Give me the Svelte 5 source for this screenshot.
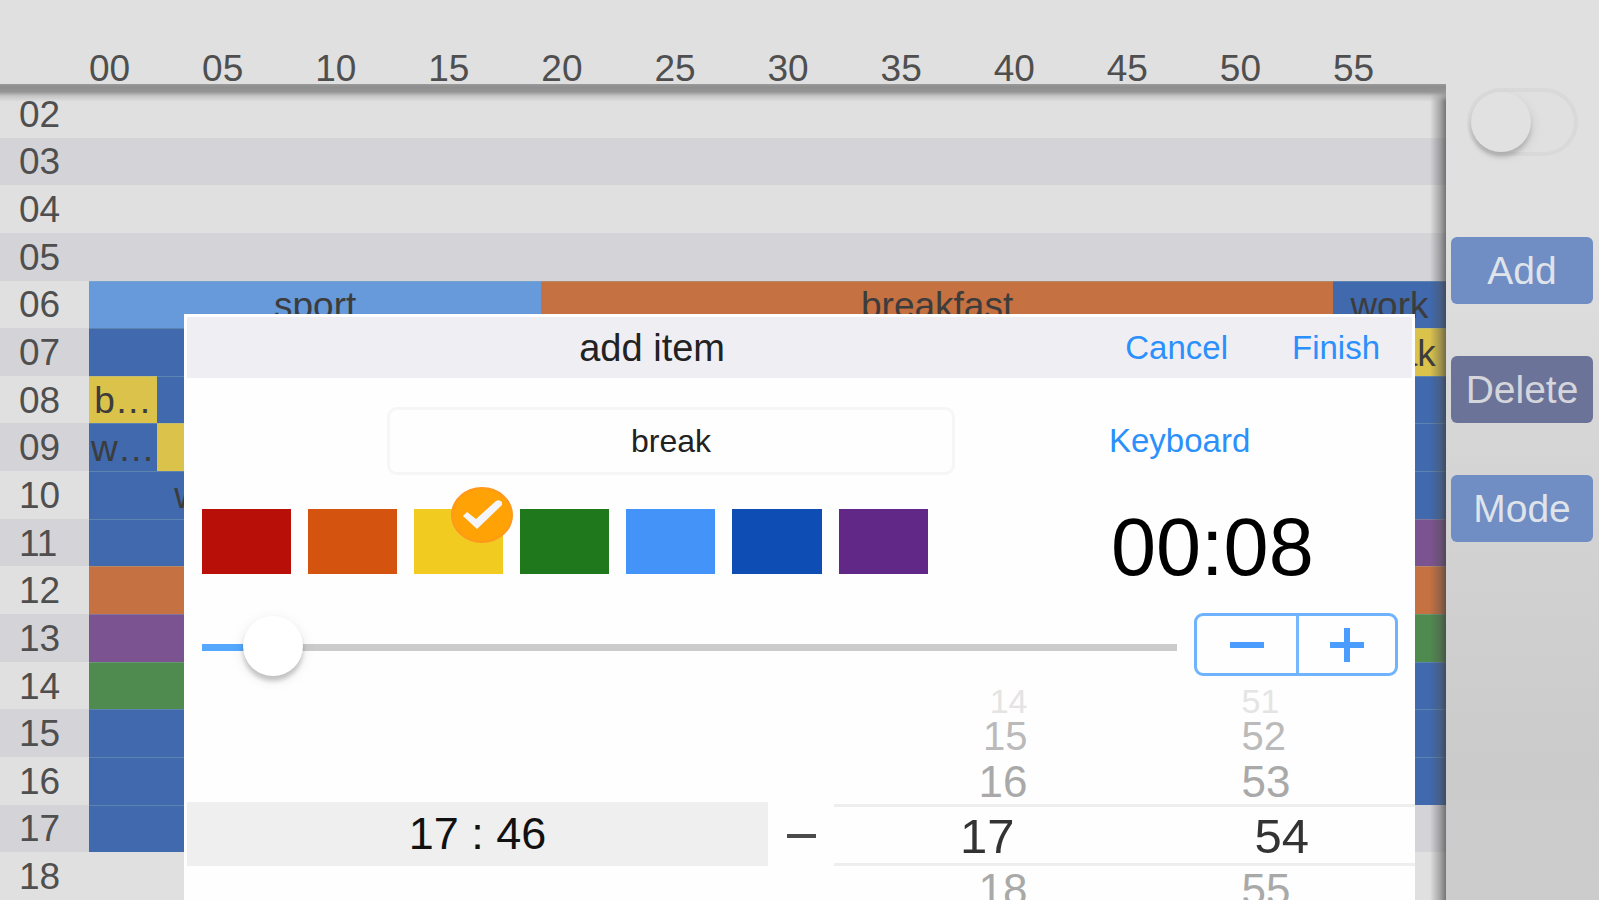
<script>
  const minutes = ['00', '05', '10', '15', '20', '25', '30', '35', '40', '45', '50', '55'];

  // Each segment: [length in minutes, colour, label]
  const hours = [
    { hour: '02', items: [] },
    { hour: '03', items: [] },
    { hour: '04', items: [] },
    { hour: '05', items: [] },
    { hour: '06', items: [[20, 'sky', 'sport'], [35, 'orange', 'breakfast'], [5, 'blue', 'work']] },
    { hour: '07', items: [[55, 'blue', ''], [5, 'yellow', 'break']] },
    { hour: '08', items: [[3, 'yellow', 'b…'], [57, 'blue', '']] },
    { hour: '09', items: [[3, 'blue', 'w…'], [5, 'yellow', ''], [52, 'blue', '']] },
    { hour: '10', items: [[11, 'blue', 'work'], [49, 'blue', '']] },
    { hour: '11', items: [[30, 'blue', ''], [30, 'purple', '']] },
    { hour: '12', items: [[60, 'orange', '']] },
    { hour: '13', items: [[30, 'purple', ''], [30, 'green', '']] },
    { hour: '14', items: [[30, 'green', ''], [30, 'blue', '']] },
    { hour: '15', items: [[60, 'blue', '']] },
    { hour: '16', items: [[60, 'blue', '']] },
    { hour: '17', items: [[46, 'blue', '']] },
    { hour: '18', items: [] }
  ];

  const swatches = [
    ['red', '#b81009'],
    ['orange', '#d4530f'],
    ['yellow', '#f1cb20'],
    ['green', '#20781d'],
    ['sky', '#4393f8'],
    ['blue', '#0e4db3'],
    ['purple', '#622887']
  ];

  const wheel = [
    ['14', '51', 'far'],
    ['15', '52', 'mid'],
    ['16', '53', 'near'],
    ['17', '54', 'selected'],
    ['18', '55', 'near']
  ];

  const maxDuration = 180;
  let enabled = $state(false);
  let selected = $state('yellow');
  let title = $state('break');
  let duration = $state(8);

  const pad = (n) => String(n).padStart(2, '0');
  let clock = $derived(`${pad(Math.floor(duration / 60))}:${pad(duration % 60)}`);
  let fill = $derived((duration / maxDuration) * 100);

  function step(by) {
    duration = Math.min(maxDuration, Math.max(0, duration + by));
  }
</script>

<div class="page">
  <main class="planner">
    <div class="minutes">
      {#each minutes as minute}
        <span>{minute}</span>
      {/each}
    </div>
    <div class="hours">
      {#each hours as row}
        <div class="hour">
          <span class="hour-label">{row.hour}</span>
          <div class="track">
            {#each row.items as [length, color, label]}
              <div class="segment {color}" style="width: {(length / 60) * 100}%">{label}</div>
            {/each}
          </div>
        </div>
      {/each}
      <div class="shade"></div>
    </div>
  </main>

  <aside class="side">
    <input class="switch" type="checkbox" aria-label="Enabled" bind:checked={enabled} />
    <div class="actions">
      <button type="button">Add</button>
      <button type="button" class="delete">Delete</button>
      <button type="button">Mode</button>
    </div>
  </aside>

  <section class="dialog" aria-labelledby="dialog-title">
    <header>
      <h1 id="dialog-title">add item</h1>
      <button type="button" class="link">Cancel</button>
      <button type="button" class="link">Finish</button>
    </header>

    <div class="form">
      <input class="name" type="text" aria-label="Item name" bind:value={title} />
      <button type="button" class="link">Keyboard</button>

      <div class="swatches">
        {#each swatches as [name, color]}
          <button
            type="button"
            class="swatch"
            aria-label={name}
            aria-pressed={selected === name}
            style="background: {color}"
            onclick={() => (selected = name)}
          >
            {#if selected === name}
              <svg class="tick" viewBox="0 0 62 56" aria-hidden="true">
                <ellipse cx="31" cy="28" rx="30" ry="27" fill="#ffa205" stroke="#ff981c" stroke-width="2" />
                <path d="M12 29 L16 25 L25 32 L45 14 Q48 12 51 15 V18 L26 42 Z" fill="#f4f5f8" />
              </svg>
            {/if}
          </button>
        {/each}
      </div>
      <output class="clock">{clock}</output>
    </div>

    <div class="duration">
      <input
        class="slider"
        type="range"
        aria-label="Duration"
        min="0"
        max={maxDuration}
        bind:value={duration}
        style="--fill: {fill}%"
      />
      <div class="stepper">
        <button type="button" aria-label="Decrease" onclick={() => step(-1)}>
          <svg viewBox="0 0 34 34" aria-hidden="true"><path d="M0 17H34" /></svg>
        </button>
        <button type="button" aria-label="Increase" onclick={() => step(1)}>
          <svg viewBox="0 0 34 34" aria-hidden="true"><path d="M0 17H34M17 0V34" /></svg>
        </button>
      </div>
    </div>

    <div class="range">
      <button type="button" class="start">17 : 46</button>
      <span class="dash"></span>
      <div class="wheel">
        {#each wheel as [hour, minute, depth]}
          <div class="wheel-row {depth}"><span>{hour}</span><span>{minute}</span></div>
        {/each}
      </div>
    </div>
  </section>
</div>

<style>
  :global(body) {
    background: #e0e0e0;
  }

  .page,
  .page * {
    box-sizing: border-box;
  }

  .page {
    position: relative;
    display: flex;
    height: 100vh;
    overflow: hidden;
    background: #e0e0e0;
    color: #4f4f4f;
    font-family: 'Liberation Sans', Arial, sans-serif;
    font-size: 37px;
    line-height: 44px;
  }

  button,
  input {
    margin: 0;
    padding: 0;
    border: 0;
    background: none;
    font: inherit;
  }

  .planner {
    flex: 1;
    min-width: 0;
    display: flex;
    flex-direction: column;
  }

  .minutes {
    display: grid;
    grid-template-columns: repeat(12, minmax(0, 1fr));
    height: 84px;
    padding: 47px 0 0 89px;
  }

  .hours {
    position: relative;
    flex: 1;
    display: flex;
    flex-direction: column;
    padding-top: 6px;
  }

  .shade {
    position: absolute;
    inset: 0;
    pointer-events: none;
    background:
      linear-gradient(to bottom, #9a9a9a 0, #8e8e8e 3px, #969696 8px, rgba(180, 180, 180, 0.6) 12px, rgba(224, 224, 224, 0) 18px) top / 100% 18px no-repeat,
      linear-gradient(to left, rgba(60, 60, 60, 0.65) 0, rgba(80, 80, 80, 0.4) 6px, rgba(120, 120, 120, 0) 16px) right / 16px 100% no-repeat;
  }

  .hour {
    flex: 1;
    min-height: 0;
    display: flex;
    align-items: stretch;
  }

  .hour:nth-child(even) {
    background: #d4d4d8;
  }

  .hour-label {
    display: flex;
    align-items: center;
    width: 89px;
    padding: 2px 0 0 19px;
  }

  .track {
    flex: 1;
    min-width: 0;
    display: flex;
  }

  .segment {
    display: flex;
    align-items: center;
    justify-content: center;
    overflow: hidden;
    padding-top: 3px;
    white-space: nowrap;
    color: #3c3c3c;
    box-shadow: inset 0 1px rgba(150, 180, 180, 0.35);
  }

  .sky { background: #669adb; }
  .orange { background: #c57141; }
  .blue { background: #4069ae; }
  .yellow { background: #dac24b; }
  .purple { background: #7c5391; }
  .green { background: #4f8a4e; }

  .side {
    width: 153px;
    padding: 88px 6px 0 5px;
    background: linear-gradient(to bottom, #e0e0e0 230px, #d4d4d4 480px, #cbcbcb 760px, #cccccc 900px);
  }

  .switch {
    appearance: none;
    display: block;
    width: 111px;
    height: 68px;
    margin: 0 auto;
    border: 4px solid #d9d9d9;
    border-radius: 34px;
  }

  .switch::before {
    content: '';
    display: block;
    width: 60px;
    height: 60px;
    border-radius: 50%;
    background: #e1e1e1;
    box-shadow: 0 5px 4px rgba(0, 0, 0, 0.16), 3px 4px 12px rgba(0, 0, 0, 0.06);
  }

  .switch:checked::before {
    margin-left: auto;
  }

  .actions {
    display: grid;
    gap: 52px;
    margin-top: 81px;
  }

  .actions button {
    height: 67px;
    border-radius: 6px;
    background: #708dc4;
    color: #dfe3ea;
    font-size: 39px;
  }

  .actions .delete {
    background: #6b7398;
    color: #d5d6dc;
  }

  .dialog {
    position: absolute;
    inset: 314px 184px 0;
    overflow: hidden;
    padding: 3px 3px 0;
    background: #fefefe;
    color: #111111;
  }

  header {
    display: flex;
    align-items: center;
    gap: 64px;
    height: 61px;
    padding-right: 32px;
    background: #efeef3;
  }

  h1 {
    flex: 1;
    margin: 0 -56px 0 0;
    color: #222222;
    font-size: 38px;
    font-weight: 400;
    text-align: center;
  }

  .link {
    color: #2b90fb;
    font-size: 33px;
  }

  .form {
    display: grid;
    grid-template-columns: minmax(0, 1fr) 303px;
    row-gap: 34px;
    align-items: center;
    justify-items: start;
    padding: 29px 0 0 15px;
  }

  .name {
    width: 568px;
    max-width: 75%;
    height: 68px;
    margin-left: 185px;
    border: 3px solid #f6f6f6;
    border-radius: 10px;
    color: #222222;
    font-size: 32px;
    text-align: center;
  }

  .swatches {
    display: grid;
    grid-template-columns: repeat(7, minmax(0, 1fr));
    gap: 17px;
    width: 80%;
  }

  .swatch {
    position: relative;
    height: 65px;
  }

  .tick {
    position: absolute;
    top: -22px;
    right: -10px;
    width: 62px;
    height: 56px;
  }

  .clock {
    height: 65px;
    padding-left: 2px;
    color: #000000;
    font-size: 81px;
    line-height: 76px;
  }

  .duration {
    display: flex;
    align-items: start;
    gap: 17px;
    margin-top: 39px;
    padding: 0 14px 0 15px;
  }

  .slider {
    appearance: none;
    flex: 1;
    min-width: 0;
    height: 68px;
  }

  .slider::-webkit-slider-runnable-track {
    height: 7px;
    background: linear-gradient(to right, #55a8fd var(--fill), #cbcbcb var(--fill));
  }

  .slider::-webkit-slider-thumb {
    appearance: none;
    width: 60px;
    height: 60px;
    margin-top: -28px;
    border-radius: 50%;
    background: #ffffff;
    box-shadow: 0 5px 4px rgba(0, 0, 0, 0.18), 0 4px 14px rgba(0, 0, 0, 0.1);
  }

  .stepper {
    display: grid;
    grid-template-columns: 1fr 1fr;
    width: 204px;
    height: 63px;
    border: 3px solid #6fb3ff;
    border-radius: 9px;
  }

  .stepper button {
    display: flex;
    align-items: center;
    justify-content: center;
  }

  .stepper button + button {
    border-left: 3px solid #77b7ff;
  }

  .stepper svg {
    width: 34px;
    height: 34px;
    fill: none;
    stroke: #4a9dff;
    stroke-width: 6;
  }

  .range {
    display: grid;
    grid-template-columns: minmax(0, 1fr) 66px minmax(0, 1fr);
    align-items: start;
    margin-right: -3px;
    padding-top: 7px;
  }

  .start {
    height: 64px;
    margin-top: 114px;
    background: #efefef;
    color: #111111;
    font-size: 45px;
  }

  .dash {
    width: 29px;
    height: 4px;
    margin: 146px auto 0;
    background: #4a4a4a;
  }

  .wheel-row {
    display: flex;
    align-items: center;
    justify-content: center;
    gap: 214px;
    height: 46px;
    padding: 2px 0 0 20px;
    color: #a9a9a9;
    font-size: 44px;
  }

  .wheel-row.mid {
    color: #bababa;
    font-size: 40px;
  }

  .wheel-row.far {
    height: 24px;
    color: #e4e4e4;
    font-size: 34px;
    line-height: 24px;
  }

  .wheel-row.selected {
    gap: 240px;
    height: 62px;
    border-top: 3px solid #eeeeee;
    border-bottom: 3px solid #eeeeee;
    color: #333333;
    font-size: 49px;
  }
</style>
